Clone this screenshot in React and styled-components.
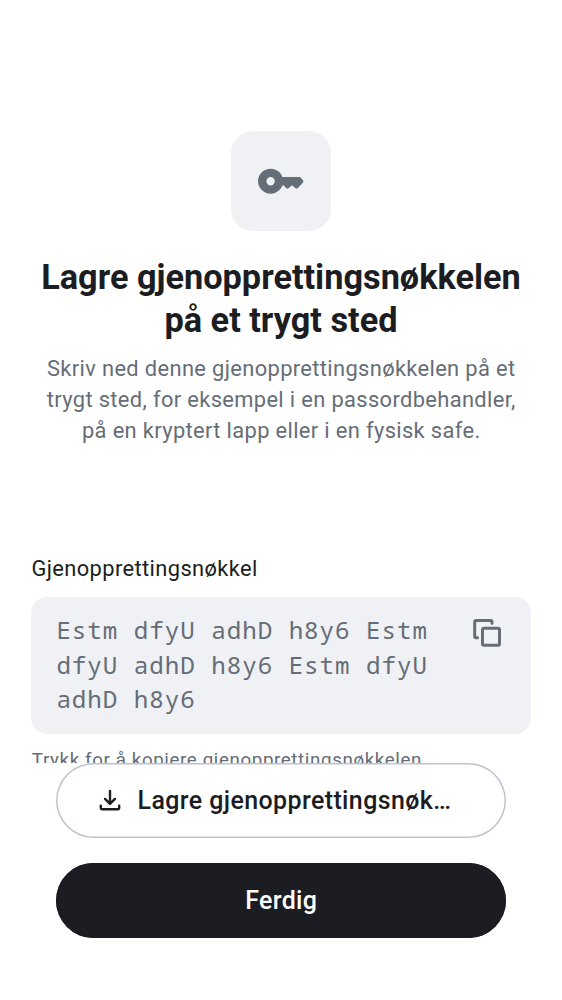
import React from "react";
import styled, { createGlobalStyle } from "styled-components";

const GlobalStyle = createGlobalStyle`
  * { box-sizing: border-box; }
  body { margin: 0; background: #fff; font-family: Roboto, "Liberation Sans", sans-serif; }
`;

const Screen = styled.main`
  display: flex;
  flex-direction: column;
  height: 1000px;
  background: #fff;
  color: #1b1d22;
`;

const Content = styled.div`
  height: 762.5px;
  flex: none;
  overflow: hidden;
  padding: 131px 31px 0;
`;

const Hero = styled.header`
  display: flex;
  flex-direction: column;
  align-items: center;
  height: 425px;
  text-align: center;
`;

const IconTile = styled.div`
  display: grid;
  place-items: center;
  width: 100px;
  height: 100px;
  border-radius: 22px;
  background: #f0f1f5;
  color: #656d77;
`;

const Title = styled.h1`
  margin: 25px 0 0;
  font-size: 34.3px;
  line-height: 43px;
  font-weight: 700;
  white-space: nowrap;
`;

const Subtitle = styled.p`
  margin: 11px 0 0;
  padding-left: 0.5px;
  color: #656d77;
  font-size: 21.86px;
  line-height: 31.2px;
  letter-spacing: 0.36px;
  white-space: nowrap;
`;

const Label = styled.div`
  padding-left: 0.4px;
  font-size: 21.86px;
  line-height: 26px;
  letter-spacing: 0.39px;
`;

const KeyField = styled.div`
  display: flex;
  justify-content: space-between;
  height: 137px;
  margin-top: 15px;
  padding: 17px 25px 0;
  border-radius: 16px;
  background: #f0f1f5;
  color: #656d77;
`;

const KeyText = styled.div`
  margin-top: -0.6px;
  padding-left: 0.4px;
  font-family: "Droid Sans Mono", "Noto Sans Mono", "DejaVu Sans Mono", monospace;
  font-size: 24.2px;
  line-height: 34.3px;
  letter-spacing: 0.97px;
  white-space: nowrap;
`;

const Helper = styled.div`
  margin-top: 14px;
  padding-left: 0.8px;
  color: #656d77;
  font-size: 18.74px;
  line-height: 25px;
  letter-spacing: 0.62px;
  white-space: nowrap;
`;

const Footer = styled.footer`
  display: flex;
  flex-direction: column;
  gap: 25px;
  padding: 0 56px;
`;

const Button = styled.button`
  display: flex;
  align-items: center;
  justify-content: ${(p) => (p.$filled ? "center" : "flex-start")};
  gap: 12px;
  height: 75px;
  padding: 0 37px 0 37.5px;
  border: 0;
  box-shadow: inset 0 0 0 1.5px ${(p) => (p.$filled ? "#1b1d22" : "#bdc3cc")};
  border-radius: 38px;
  background: ${(p) => (p.$filled ? "#1b1d22" : "#fff")};
  color: ${(p) => (p.$filled ? "#fff" : "#1b1d22")};
  font: 500 24.98px/37px Roboto, "Liberation Sans", sans-serif;
  letter-spacing: ${(p) => (p.$filled ? 0.3 : 0.4)}px;
  white-space: nowrap;
`;

const CopyIcon = styled.svg`
  flex: none;
`;

export default function App() {
  return (
    <Screen>
      <GlobalStyle />
      <Content>
        <Hero>
          <IconTile>
            <svg width="50" height="50" viewBox="0 0 24 24" fill="currentColor">
              <path fillRule="evenodd" d="M7 6.1a6 6 0 1 0 0 12A6 6 0 0 0 7 6.1Zm0 4a2 2 0 1 1 0 4 2 2 0 0 1 0-4Z" />
              <path
                d="M11 10.5h10l1.3 1.4v.5l-2.6 2.8h-.4l-1.9-1.5h-.5l-1.6 1.5h-.5l-1.3-1.5H11Z"
                stroke="currentColor"
                strokeWidth="0.8"
                strokeLinejoin="round"
              />
            </svg>
          </IconTile>
          <Title>
            Lagre gjenopprettingsnøkkelen
            <br />
            på et trygt sted
          </Title>
          <Subtitle>
            Skriv ned denne gjenopprettingsnøkkelen på et
            <br />
            trygt sted, for eksempel i en passordbehandler,
            <br />
            på en kryptert lapp eller i en fysisk safe.
          </Subtitle>
        </Hero>
        <Label>Gjenopprettingsnøkkel</Label>
        <KeyField>
          <KeyText>
            Estm dfyU adhD h8y6 Estm
            <br />
            dfyU adhD h8y6 Estm dfyU
            <br />
            adhD h8y6
          </KeyText>
          <CopyIcon width="38" height="38" viewBox="0 0 38 38" fill="none" stroke="currentColor" strokeWidth="3" strokeLinecap="round" strokeLinejoin="round">
            <path d="M9.5 23.7H8.2a1.5 1.5 0 0 1-1.5-1.5V7.9a1.5 1.5 0 0 1 1.5-1.5h14.3a1.5 1.5 0 0 1 1.5 1.5v1.3" />
            <rect x="14.5" y="14.3" width="17" height="17" rx="1.5" />
          </CopyIcon>
        </KeyField>
        <Helper>Trykk for å kopiere gjenopprettingsnøkkelen</Helper>
      </Content>
      <Footer>
        <Button>
          <svg width="32" height="32" viewBox="0 0 24 24" fill="none" stroke="currentColor" strokeWidth="1.8" strokeLinecap="round" strokeLinejoin="round">
            <path d="M12 5.2v9.6M8.3 11.2l3.7 3.7 3.7-3.7M5.1 16.2v1.7a1 1 0 0 0 1 1h11.8a1 1 0 0 0 1-1v-1.7" />
          </svg>
          <span>Lagre gjenopprettingsnøk…</span>
        </Button>
        <Button $filled>Ferdig</Button>
      </Footer>
    </Screen>
  );
}
